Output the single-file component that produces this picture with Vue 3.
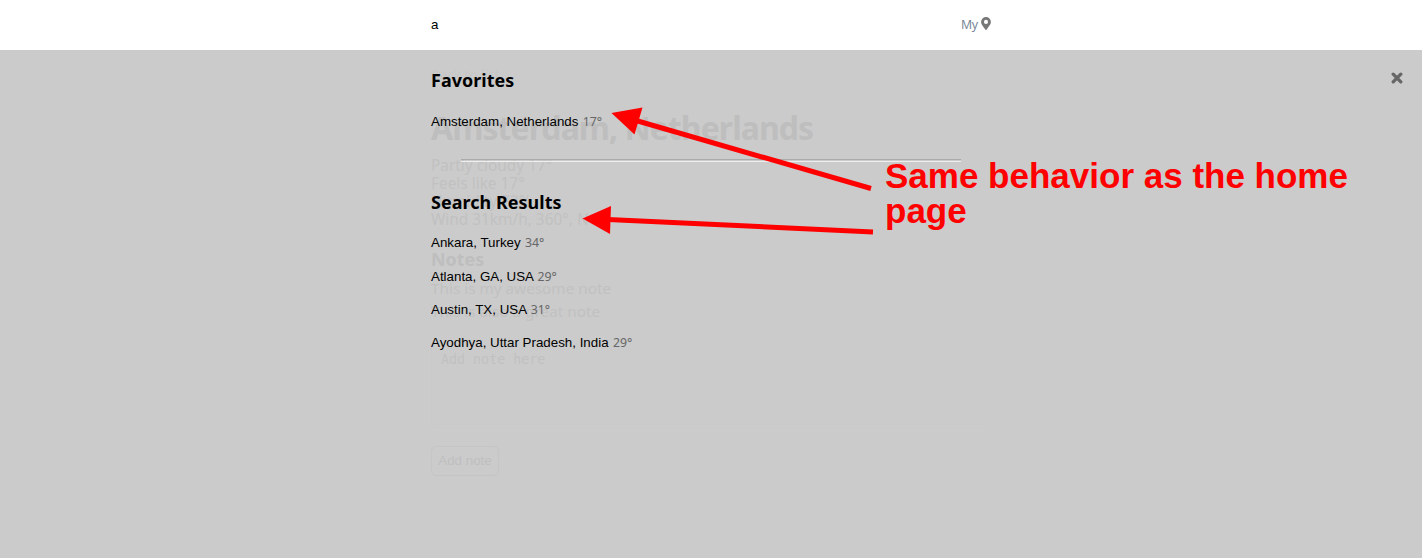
<script setup>
const favorites = [{ name: 'Amsterdam, Netherlands', temp: '17°' }]
const results = [
  { name: 'Ankara, Turkey', temp: '34°' },
  { name: 'Atlanta, GA, USA', temp: '29°' },
  { name: 'Austin, TX, USA', temp: '31°' },
  { name: 'Ayodhya, Uttar Pradesh, India', temp: '29°' },
]
const weather = ['Partly cloudy 17°', 'Feels like 17°', 'Humidity 72%', 'Wind 31km/h, 360°, N']
const notes = ['This is my awesome note', 'This is also a great note']
</script>

<template>
  <div class="app">
    <header class="bar">
      <div class="column bar-row">
        <span class="query">a</span>
        <span class="mine">
          <span class="my">My</span>
          <svg class="pin" viewBox="0 0 384 512"><path d="M172 502C27 291 0 269 0 192a192 192 0 1 1 384 0c0 77-27 99-172 310a24 24 0 0 1-40 0zM192 272a80 80 0 1 0 0-160 80 80 0 0 0 0 160z" /></svg>
        </span>
      </div>
    </header>
    <main class="stage">
      <section class="page column">
        <div class="back">Back to list</div>
        <h1>Amsterdam, Netherlands</h1>
        <ul class="weather"><li v-for="w in weather" :key="w">{{ w }}</li></ul>
        <h3>Notes</h3>
        <ul class="notes"><li v-for="n in notes" :key="n">{{ n }}</li></ul>
        <div class="field">Add note here</div>
        <button class="add">Add note</button>
      </section>
      <section class="overlay">
        <div class="column panel">
          <h3 class="fav">Favorites</h3>
          <p v-for="c in favorites" :key="c.name" class="city">{{ c.name }} <small>{{ c.temp }}</small></p>
          <div class="rule"></div>
          <h3 class="res">Search Results</h3>
          <p v-for="c in results" :key="c.name" class="city">{{ c.name }} <small>{{ c.temp }}</small></p>
        </div>
        <svg class="close" viewBox="0 0 12 12"><path d="M2.2 2.2 9.8 9.8M9.8 2.2 2.2 9.8" /></svg>
      </section>
    </main>
    <svg class="arrows" viewBox="0 0 1422 558">
      <path d="M636 120.5 871 188.5M608 219.5 873 232" />
      <polygon points="611.500,113 642.500,107.500 634.500,134.500" />
      <polygon points="582.500,218.500 611,206 610,234" />
    </svg>
    <p class="callout">Same behavior as the home page</p>
  </div>
</template>

<style>
html, body { margin: 0; overflow: hidden; }
</style>

<style scoped>
.app { position: relative; width: 1422px; height: 558px; overflow: hidden; font-family: "Noto Sans", sans-serif; background: #cbcbcb; }
h1, h3, p, ul { margin: 0; padding: 0; list-style: none; }
.column { width: 560px; margin: 0 auto; box-sizing: border-box; }
.bar { height: 50px; background: #fff; }
.bar-row { display: flex; justify-content: space-between; align-items: center; height: 48px; }
.query { font: 13.33px "Liberation Sans", sans-serif; }
.mine { display: flex; align-items: center; gap: 4px; width: 30px; }
.my { width: 17px; font-size: 12.3px; letter-spacing: -0.3px; color: #778899; }
.pin { width: 10px; height: 13px; margin: 0 0 2px -0.5px; fill: #777; flex: none; }
.stage { position: relative; height: 508px; }
.page { padding-top: 15px; color: #c1c1c1; }
.back { height: 38px; font-size: 13.5px; line-height: 20px; color: #c7c7c7; }
.page h1 { height: 53.5px; font-size: 32px; line-height: 50px; letter-spacing: -0.95px; color: #bebebe; white-space: nowrap; }
.weather li { font-size: 15.4px; line-height: 18.3px; white-space: nowrap; }
.page h3 { margin-top: 17px; font-size: 17.9px; line-height: 24px; color: #bebebe; }
.notes { margin-top: 6px; }
.notes li { font-size: 15.3px; line-height: 23.5px; white-space: nowrap; }
.field { height: 89px; box-sizing: border-box; margin-top: 18px; padding: 10px 9px; border-left: 1px solid #c9c9c9; border-bottom: 1px solid #cdcdcd; border-radius: 5px; font: 13.33px/15px "DejaVu Sans Mono", monospace; }
.add { display: block; width: 68px; height: 30px; margin-top: 15px; padding: 0; border: 1px solid #c5c5c5; border-radius: 5px; background: none; color: #bfbfbf; font: 13.33px "Liberation Sans", sans-serif; }
.overlay { position: absolute; inset: 0; }
.panel { padding-top: 18px; }
.panel h3 { height: 24px; font-size: 17.9px; line-height: 24px; letter-spacing: 0.08px; color: #000; }
.city { height: 15px; margin-top: 18.3px; font: 13.33px/15px "Liberation Sans", sans-serif; color: #000; white-space: nowrap; }
.city small { margin-left: 0.6px; font: 12.3px/15px "Noto Sans", sans-serif; color: #666; }
.panel .fav + .city { margin-top: 22px; }
.panel .res + .city { margin-top: 21.3px; }
.rule { width: 500px; height: 1px; margin: 30px 30px 0; border-top: 1px solid #aaa; border-bottom: 1px solid #eee; }
.panel .res { margin-top: 28px; }
.close { position: absolute; top: 22px; right: 19px; width: 12px; height: 12px; fill: none; stroke: #666; stroke-width: 3.3; stroke-linecap: round; }
.arrows { position: absolute; inset: 0; width: 1422px; height: 558px; fill: #f00; }
.arrows path { fill: none; stroke: #f00; stroke-width: 5; }
.callout { position: absolute; left: 885px; top: 158px; width: 500px; font: bold 35px/35px "Liberation Sans", sans-serif; color: #f00; }
</style>
